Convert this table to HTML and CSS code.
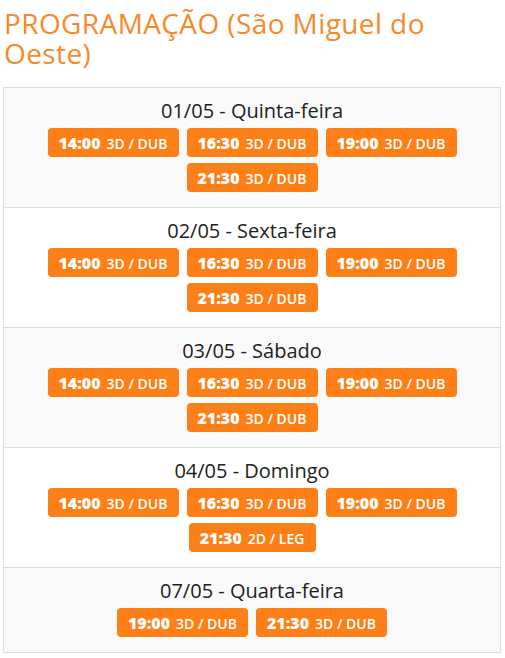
FILE: index.html
```html
<!DOCTYPE html>
<html lang="pt-BR">
<head>
	<meta charset="UTF-8">
	<title>Programação</title>
	<link rel="stylesheet" href="styles.css">
</head>
<body>
	<h2 class='titulo'>PROGRAMAÇÃO (São Miguel do Oeste)</h2>
	<div class='programacao'>
		<div class='dia'>
			<div class='data'>01/05 - Quinta-feira</div>
			<div class='sessoes'>
				<span class='sessao'><b>14:00</b> 3D / DUB</span>
				<span class='sessao'><b>16:30</b> 3D / DUB</span>
				<span class='sessao'><b>19:00</b> 3D / DUB</span>
				<span class='sessao'><b>21:30</b> 3D / DUB</span>
			</div>
		</div>
		<div class='dia'>
			<div class='data'>02/05 - Sexta-feira</div>
			<div class='sessoes'>
				<span class='sessao'><b>14:00</b> 3D / DUB</span>
				<span class='sessao'><b>16:30</b> 3D / DUB</span>
				<span class='sessao'><b>19:00</b> 3D / DUB</span>
				<span class='sessao'><b>21:30</b> 3D / DUB</span>
			</div>
		</div>
		<div class='dia'>
			<div class='data'>03/05 - Sábado</div>
			<div class='sessoes'>
				<span class='sessao'><b>14:00</b> 3D / DUB</span>
				<span class='sessao'><b>16:30</b> 3D / DUB</span>
				<span class='sessao'><b>19:00</b> 3D / DUB</span>
				<span class='sessao'><b>21:30</b> 3D / DUB</span>
			</div>
		</div>
		<div class='dia'>
			<div class='data'>04/05 - Domingo</div>
			<div class='sessoes'>
				<span class='sessao'><b>14:00</b> 3D / DUB</span>
				<span class='sessao'><b>16:30</b> 3D / DUB</span>
				<span class='sessao'><b>19:00</b> 3D / DUB</span>
				<span class='sessao leg'><b>21:30</b> 2D / LEG</span>
			</div>
		</div>
		<div class='dia'>
			<div class='data'>07/05 - Quarta-feira</div>
			<div class='sessoes'>
				<span class='sessao'><b>19:00</b> 3D / DUB</span>
				<span class='sessao'><b>21:30</b> 3D / DUB</span>
			</div>
		</div>
	</div>
</body>
</html>
```

FILE: styles.css
```css
*{
	margin: 0;
	padding: 0;
	box-sizing: border-box;
}
body{
	padding: 8px 4px 0 3px;
	font-family: "Open Sans", "Liberation Sans", sans-serif;
	color: #222;
	background: #fff;
}
.titulo{
	font-weight: 400;
	font-size: 28px;
	line-height: 30px;
	letter-spacing: 0.4px;
	color: #f7892a;
	margin: 0 0 19px 1px;
}
.programacao{
	border: 1px solid #ddd;
}
.dia{
	padding: 10px 8px 15px;
	border-top: 1px solid #ddd;
	text-align: center;
}
.dia:first-child{
	border-top: none;
}
.dia:nth-child(odd){
	background: #f9f9f9;
}
.data{
	font-size: 20px;
	line-height: 26px;
	margin-bottom: 4px;
}
.sessoes{
	display: flex;
	flex-wrap: wrap;
	justify-content: center;
	gap: 6px 8px;
	padding: 0 35px;
}
.sessao{
	display: inline-flex;
	align-items: baseline;
	justify-content: center;
	gap: 6px;
	width: 131px;
	height: 29px;
	padding-top: 4px;
	background: #fd7f18;
	color: #fff;
	border-radius: 4px;
	font-size: 14px;
	font-weight: 600;
}
.sessao.leg{
	width: 127px;
}
.sessao b{
	font-size: 16px;
	font-weight: 800;
}
```
